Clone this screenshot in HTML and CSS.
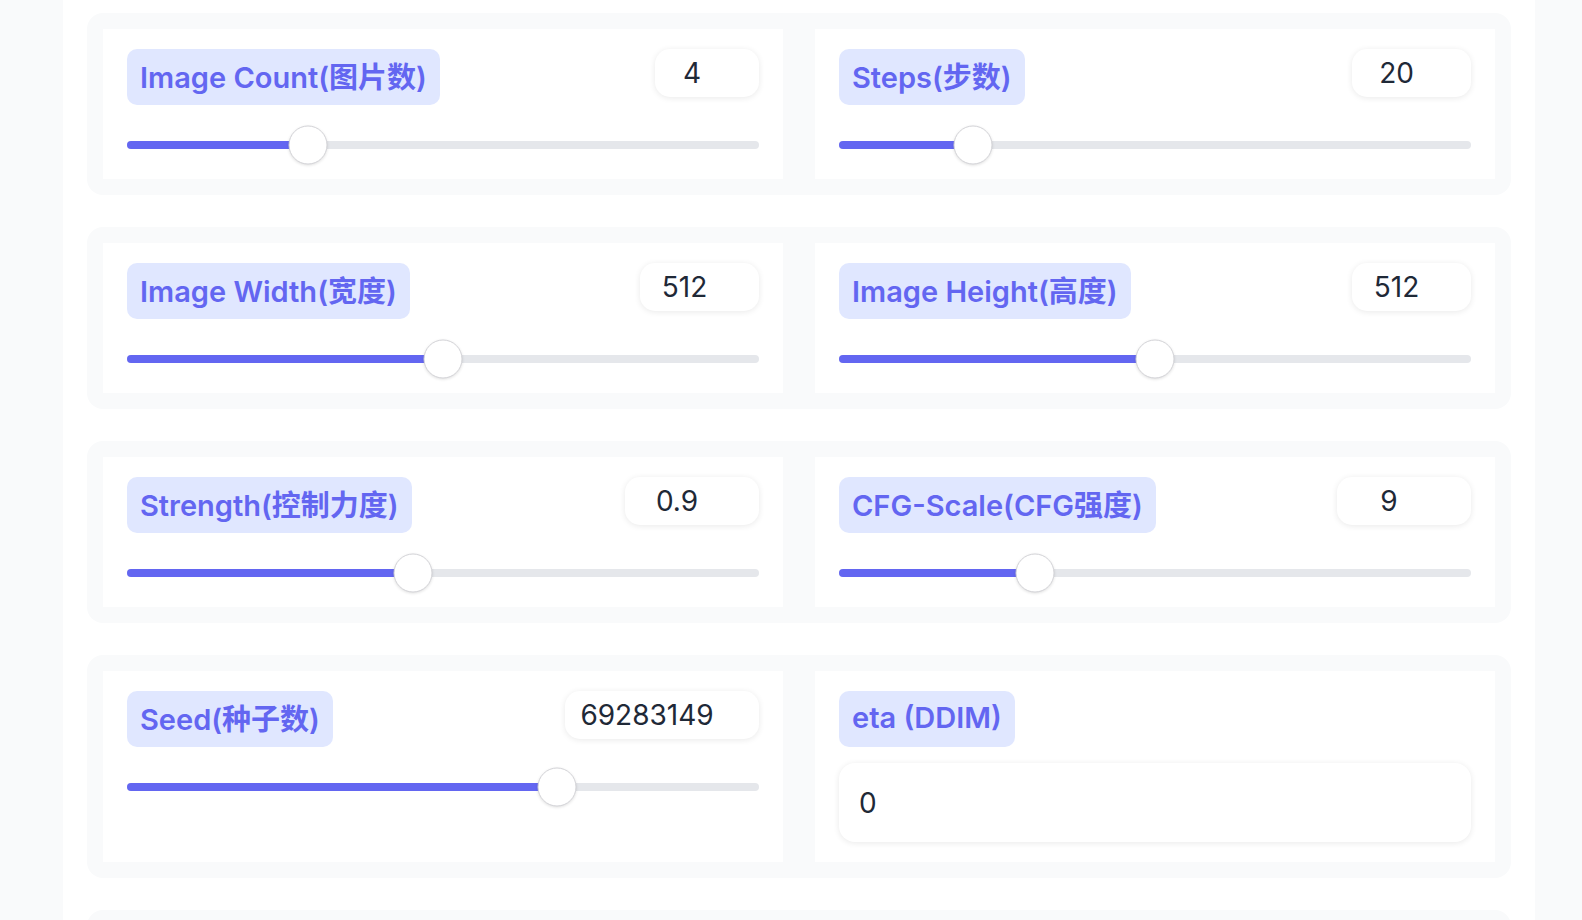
FILE: index.html
```html
<!DOCTYPE html>
<html lang="zh">
<head>
<meta charset="utf-8">
<title>Settings</title>
<link rel="stylesheet" href="styles.css">
</head>
<body>
<main class="page">
  <section class="group">
    <div class="panel">
      <div class="head">
        <span class="badge">Image Count(图片数)</span>
        <span class="num" style="width:104px">4</span>
      </div>
      <div class="slider"><div class="track"><div class="fill" style="width:181px"></div><div class="thumb" style="left:181px"></div></div></div>
    </div>
    <div class="panel">
      <div class="head">
        <span class="badge">Steps(步数)</span>
        <span class="num" style="width:119px">20</span>
      </div>
      <div class="slider"><div class="track"><div class="fill" style="width:134px"></div><div class="thumb" style="left:134px"></div></div></div>
    </div>
  </section>

  <section class="group">
    <div class="panel">
      <div class="head">
        <span class="badge">Image Width(宽度)</span>
        <span class="num" style="width:119px">512</span>
      </div>
      <div class="slider"><div class="track"><div class="fill" style="width:316px"></div><div class="thumb" style="left:316px"></div></div></div>
    </div>
    <div class="panel">
      <div class="head">
        <span class="badge">Image Height(高度)</span>
        <span class="num" style="width:119px">512</span>
      </div>
      <div class="slider"><div class="track"><div class="fill" style="width:316px"></div><div class="thumb" style="left:316px"></div></div></div>
    </div>
  </section>

  <section class="group">
    <div class="panel">
      <div class="head">
        <span class="badge">Strength(控制力度)</span>
        <span class="num" style="width:134px">0.9</span>
      </div>
      <div class="slider"><div class="track"><div class="fill" style="width:286px"></div><div class="thumb" style="left:286px"></div></div></div>
    </div>
    <div class="panel">
      <div class="head">
        <span class="badge">CFG-Scale(CFG强度)</span>
        <span class="num" style="width:134px">9</span>
      </div>
      <div class="slider"><div class="track"><div class="fill" style="width:196px"></div><div class="thumb" style="left:196px"></div></div></div>
    </div>
  </section>

  <section class="group">
    <div class="panel">
      <div class="head">
        <span class="badge">Seed(种子数)</span>
        <span class="num" style="width:194px">69283149</span>
      </div>
      <div class="slider"><div class="track"><div class="fill" style="width:430px"></div><div class="thumb" style="left:430px"></div></div></div>
    </div>
    <div class="panel panel-text">
      <div class="head">
        <span class="badge">eta (DDIM)</span>
      </div>
      <div class="textbox">0</div>
    </div>
  </section>

  <section class="group">
    <div class="panel panel-empty"></div>
    <div class="panel panel-empty"></div>
  </section>
</main>
</body>
</html>
```

FILE: styles.css
```css
* { box-sizing: border-box; }

html, body {
  margin: 0;
  padding: 0;
  height: 100%;
  overflow: hidden;
  background: #f9fafb;
  font-family: Inter, "Noto Sans CJK SC", sans-serif;
}

.page {
  width: 1472px;
  margin-left: 63px;
  min-height: 100%;
  background: #ffffff;
  padding: 13px 24px 0;
  display: flex;
  flex-direction: column;
  gap: 32px;
}

.group {
  background: #f9fafb;
  border-radius: 16px;
  padding: 16px;
  display: grid;
  grid-template-columns: 1fr 1fr;
  gap: 32px;
}

.panel {
  background: #ffffff;
  padding: 20px 24px 14px;
  display: flex;
  flex-direction: column;
}

.panel-text { padding-bottom: 20px; }

.panel-empty { height: 150px; }

.head {
  display: flex;
  justify-content: space-between;
  align-items: flex-start;
}

.badge {
  height: 56px;
  display: inline-flex;
  align-items: center;
  padding: 0 13px 4px;
  background: #e0e7ff;
  color: #6366f1;
  border-radius: 10px;
  font-size: 29px;
  font-weight: 600;
  white-space: nowrap;
}

.num {
  height: 48px;
  display: flex;
  align-items: center;
  justify-content: center;
  padding: 0 46px 0 16px;
  background: #ffffff;
  border-radius: 15px;
  box-shadow: 0 1px 6px rgba(0, 0, 0, 0.09);
  color: #1f2937;
  font-size: 28px;
  font-weight: 400;
}

.slider {
  margin-top: 20px;
  height: 40px;
  display: flex;
  align-items: center;
}

.track {
  position: relative;
  width: 100%;
  height: 8px;
  border-radius: 4px;
  background: #e5e7eb;
}

.fill {
  height: 100%;
  border-radius: 4px;
  background: #6366f1;
}

.thumb {
  position: absolute;
  top: 50%;
  width: 39px;
  height: 39px;
  transform: translate(-50%, -50%);
  border-radius: 50%;
  background: #ffffff;
  border: 1px solid #d4d4d8;
  box-shadow: 0 1px 3px rgba(0, 0, 0, 0.12);
}

.textbox {
  margin-top: 16px;
  height: 79px;
  display: flex;
  align-items: center;
  padding: 0 20px;
  background: #ffffff;
  border-radius: 16px;
  box-shadow: 0 1px 6px rgba(0, 0, 0, 0.09);
  color: #1f2937;
  font-size: 28px;
}
```
